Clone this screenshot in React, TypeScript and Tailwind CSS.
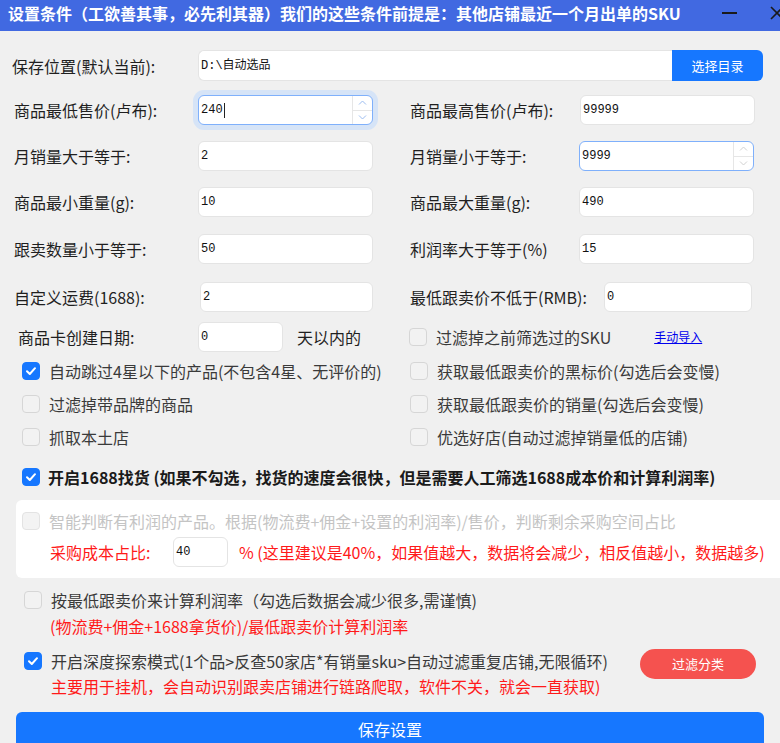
import React from 'react';

const Check = ({ checked, disabled }: { checked?: boolean; disabled?: boolean }) => (
  <span
    className={`flex items-center justify-center w-[18px] h-[18px] rounded-[4px] shrink-0 border ${
      checked
        ? 'bg-[#1677ff] border-[#1677ff]'
        : disabled
        ? 'bg-[#f3f3f3] border-[#e3e3e3]'
        : 'bg-[#f2f2f2] border-[#d6d6d6]'
    }`}
  >
    {checked && (
      <svg width="12" height="12" viewBox="0 0 12 12">
        <path d="M2 6.3 L4.8 9 L10 3.2" fill="none" stroke="#fff" strokeWidth="2" strokeLinecap="round" strokeLinejoin="round" />
      </svg>
    )}
  </span>
);

const Spinner = ({ tint }: { tint: string }) => (
  <div className="ml-auto h-full w-[20px] flex flex-col border-l border-[#e6e6e6]">
    <div className="flex-1 flex items-center justify-center border-b border-[#e6e6e6]">
      <svg width="9" height="5" viewBox="0 0 9 5">
        <path d="M1 4.5 L4.5 1 L8 4.5" fill="none" stroke={tint} strokeWidth="1" />
      </svg>
    </div>
    <div className="flex-1 flex items-center justify-center">
      <svg width="9" height="5" viewBox="0 0 9 5">
        <path d="M1 0.5 L4.5 4 L8 0.5" fill="none" stroke={tint} strokeWidth="1" />
      </svg>
    </div>
  </div>
);

const Field = ({
  value,
  width,
  focus,
  spin,
  caret,
}: {
  value: string;
  width: string;
  focus?: 'ring' | 'border';
  spin?: boolean;
  caret?: boolean;
}) => (
  <div
    className={`${width} h-[30px] shrink-0 bg-white rounded-[6px] flex items-center pl-[2px] overflow-hidden border ${
      focus ? 'border-[#7fb0fb]' : 'border-[#e4e4e4]'
    } ${focus === 'ring' ? 'shadow-[0_0_0_5px_#d6e4f7] border-[#6ea3f5]' : ''}`}
  >
    <span className="text-[12px] text-[#111] font-['Liberation_Mono','Noto_Sans_CJK_SC',monospace] leading-none">
      {value}
    </span>
    {caret && <span className="w-px h-[15px] bg-[#222] ml-px" />}
    {spin && <Spinner tint={focus === 'ring' ? '#9bbcf0' : '#d0d0d0'} />}
  </div>
);

const rows = [
  { l: '商品最低售价(卢布):', lv: '240', r: '商品最高售价(卢布):', rv: '99999', mt: 'mt-[14px]', rx: 'w-[170px]', lf: 'ring' as const, rf: undefined },
  { l: '月销量大于等于:', lv: '2', r: '月销量小于等于:', rv: '9999', mt: 'mt-[16px]', rx: 'w-[169px]', lf: undefined, rf: 'border' as const },
  { l: '商品最小重量(g):', lv: '10', r: '商品最大重量(g):', rv: '490', mt: 'mt-[16px]', rx: 'w-[169px]', lf: undefined, rf: undefined },
  { l: '跟卖数量小于等于:', lv: '50', r: '利润率大于等于(%)', rv: '15', mt: 'mt-[17px]', rx: 'w-[169px]', lf: undefined, rf: undefined },
];

const App = () => {
  return (
    <div className="w-[780px] h-[743px] overflow-hidden bg-[#f0f0f0] flex flex-col font-['Noto_Sans_CJK_SC',sans-serif] text-[16px] text-[#1f1f1f]">
      {/* Title bar */}
      <div className="h-[31px] shrink-0 bg-[#4169e1] flex items-start pl-[8px] pt-[2px]">
        <span className="text-white font-bold text-[16px] leading-[22px] whitespace-nowrap">
          设置条件（工欲善其事，必先利其器）我们的这些条件前提是：其他店铺最近一个月出单的SKU
        </span>
        <div className="ml-auto flex items-center h-[22px] gap-[33px] -mr-[4px]">
          <span className="w-[15px] h-[2px] bg-[#1a1a1a]" />
          <svg width="14" height="14" viewBox="0 0 14 14">
            <path d="M1 1 L13 13 M13 1 L1 13" stroke="#1a1a1a" strokeWidth="1.6" />
          </svg>
        </div>
      </div>

      {/* Save location */}
      <div className="mt-[19px] h-[31px] flex items-center shrink-0">
        <div className="w-[198px] pl-[12px] whitespace-nowrap">保存位置(默认当前):</div>
        <div className="w-[474px] h-[31px] bg-white border border-[#e4e4e4] border-r-0 rounded-l-[6px] flex items-center pl-[2px]">
          <span className="text-[12px] text-[#111] font-['Liberation_Mono','Noto_Sans_CJK_SC',monospace]">D:\自动选品</span>
        </div>
        <button className="w-[91px] h-[31px] bg-[#1677ff] text-white text-[13px] rounded-r-[6px]">选择目录</button>
      </div>

      {rows.map((r, i) => (
        <div key={i} className={`${r.mt} h-[30px] flex items-center shrink-0`}>
          <div className="w-[198px] pl-[14px] whitespace-nowrap">{r.l}</div>
          <Field value={r.lv} width="w-[175px]" focus={r.lf} spin={i === 0} caret={i === 0} />
          <div className="w-[37px]" />
          <div className={`${r.rx} whitespace-nowrap`}>{r.r}</div>
          <Field value={r.rv} width="w-[175px]" focus={r.rf} spin={i === 1} />
        </div>
      ))}

      <div className="mt-[18px] h-[30px] flex items-center shrink-0">
        <div className="w-[200px] pl-[14px] whitespace-nowrap">自定义运费(1688):</div>
        <Field value="2" width="w-[173px]" />
        <div className="w-[37px]" />
        <div className="w-[194px] whitespace-nowrap">最低跟卖价不低于(RMB):</div>
        <Field value="0" width="w-[148px]" />
      </div>

      <div className="mt-[10px] h-[30px] flex items-center shrink-0">
        <div className="w-[198px] pl-[18px] whitespace-nowrap">商品卡创建日期:</div>
        <Field value="0" width="w-[85px]" />
        <span className="ml-[14px]">天以内的</span>
        <div className="ml-[48px] flex items-center gap-[9px] text-[#3a3a3a]">
          <Check />
          <span>过滤掉之前筛选过的SKU</span>
        </div>
        <a className="ml-[43px] text-[12px] text-[#0000ee] underline">手动导入</a>
      </div>

      {/* Options */}
      <div className="mt-[2px] grid grid-cols-[410px_1fr] text-[#3a3a3a] shrink-0">
        {[
          ['自动跳过4星以下的产品(不包含4星、无评价的)', '获取最低跟卖价的黑标价(勾选后会变慢)', true],
          ['过滤掉带品牌的商品', '获取最低跟卖价的销量(勾选后会变慢)', false],
          ['抓取本土店', '优选好店(自动过滤掉销量低的店铺)', false],
        ].map(([a, b, c], i) => (
          <React.Fragment key={i}>
            <div className="h-[33px] flex items-center gap-[9px] pl-[22px] whitespace-nowrap">
              <Check checked={c as boolean} />
              <span>{a}</span>
            </div>
            <div className="h-[33px] flex items-center gap-[9px] whitespace-nowrap">
              <Check />
              <span>{b}</span>
            </div>
          </React.Fragment>
        ))}
      </div>

      <div className="mt-[12px] h-[24px] flex items-center gap-[8px] pl-[22px] shrink-0">
        <Check checked />
        <span className="font-bold text-[#1a1a1a] whitespace-nowrap">开启1688找货 (如果不勾选，找货的速度会很快，但是需要人工筛选1688成本价和计算利润率)</span>
      </div>

      {/* 1688 panel */}
      <div className="mt-[11px] ml-[16px] w-[780px] h-[78px] bg-white rounded-l-[6px] pt-[9px] shrink-0">
        <div className="h-[24px] flex items-center gap-[9px] pl-[6px] text-[#c4c4c4] whitespace-nowrap">
          <Check disabled />
          <span>智能判断有利润的产品。根据(物流费+佣金+设置的利润率)/售价，判断剩余采购空间占比</span>
        </div>
        <div className="mt-[4px] h-[30px] flex items-center text-[#ff1a1a] whitespace-nowrap">
          <span className="pl-[34px] w-[157px]">采购成本占比:</span>
          <Field value="40" width="w-[55px]" />
          <span className="ml-[11px]">% (这里建议是40%，如果值越大，数据将会减少，相反值越小，数据越多)</span>
        </div>
      </div>

      <div className="mt-[10px] h-[24px] flex items-center gap-[9px] pl-[24px] text-[#3a3a3a] whitespace-nowrap shrink-0">
        <Check />
        <span>按最低跟卖价来计算利润率（勾选后数据会减少很多,需谨慎)</span>
      </div>
      <div className="mt-[2px] h-[24px] flex items-center pl-[50px] text-[#ff1a1a] whitespace-nowrap shrink-0">
        (物流费+佣金+1688拿货价)/最低跟卖价计算利润率
      </div>

      <div className="mt-[11px] flex items-start shrink-0">
        <div className="flex flex-col">
          <div className="h-[24px] flex items-center gap-[9px] pl-[24px] text-[#3a3a3a] whitespace-nowrap">
            <Check checked />
            <span>开启深度探索模式(1个品&gt;反查50家店*有销量sku&gt;自动过滤重复店铺,无限循环)</span>
          </div>
          <div className="mt-px h-[24px] flex items-center pl-[51px] text-[#ff1a1a] whitespace-nowrap">
            主要用于挂机，会自动识别跟卖店铺进行链路爬取，软件不关，就会一直获取)
          </div>
        </div>
        <button className="ml-auto mr-[24px] w-[116px] h-[30px] rounded-full bg-[#f5524f] text-white text-[13px]">过滤分类</button>
      </div>

      <button className="mt-[14px] mx-[16px] h-[40px] shrink-0 bg-[#1677ff] text-white text-[16px] rounded-t-[6px] flex items-start justify-center pt-[5px]">
        保存设置
      </button>
    </div>
  );
};

export default App;
